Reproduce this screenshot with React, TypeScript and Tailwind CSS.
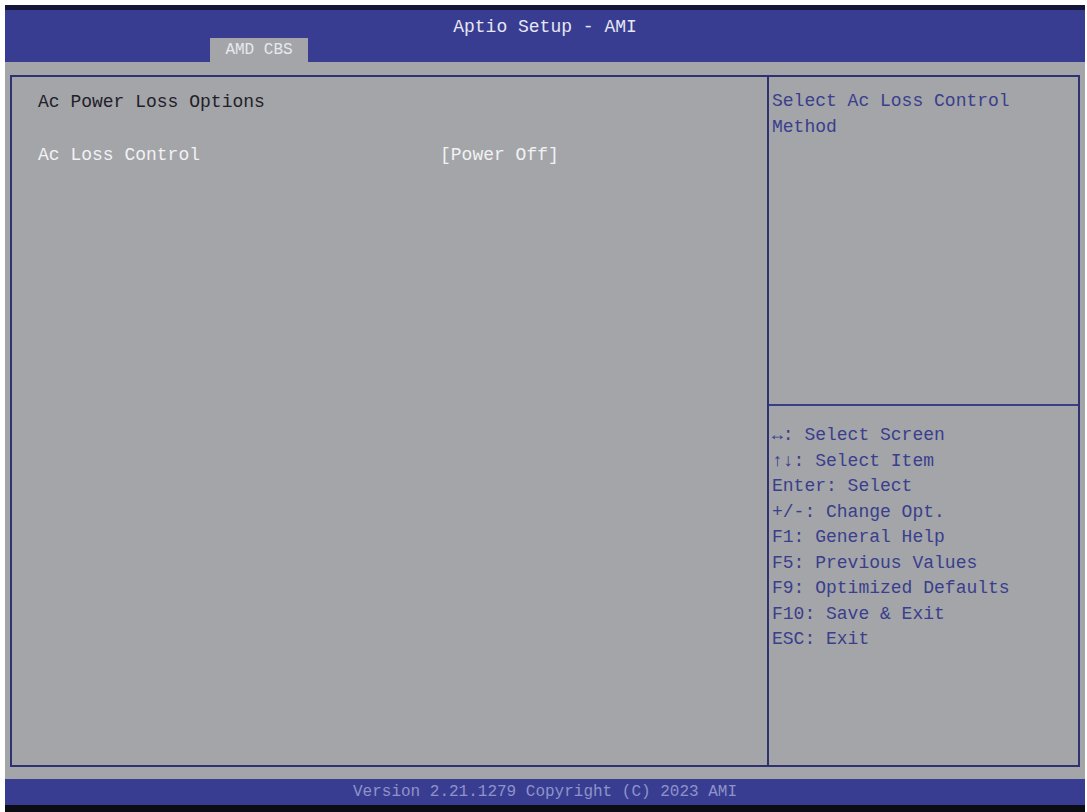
export default function App() {
  const help = [
    '\u2194: Select Screen',
    '\u2191\u2193: Select Item',
    'Enter: Select',
    '+/-: Change Opt.',
    'F1: General Help',
    'F5: Previous Values',
    'F9: Optimized Defaults',
    'F10: Save & Exit',
    'ESC: Exit',
  ]
  return (
    <div className="w-[1087px] h-[812px] bg-white pl-[5px] pt-[5px] pr-[2px] font-[Liberation_Mono] text-[18px] leading-none">
      <div className="h-[807px] flex flex-col bg-[#a3a5a9]">
        <div className="h-[57px] bg-[#393d92] border-t-[5px] border-[#14163a] relative flex justify-center">
          <span className="mt-[8px] text-[#e6e7f2]">Aptio Setup - AMI</span>
          <div className="absolute left-[205px] bottom-0 w-[98px] h-[24px] bg-[#a3a5a9] flex items-center justify-center text-[#e8e9ee] text-[16px]">
            AMD CBS
          </div>
        </div>
        <div className="h-[13px]" />
        <div className="mx-[5px] flex-1 flex border-2 border-[#2e3270]">
          <div className="w-[757px] border-r-2 border-[#2e3270] pl-[26px] pt-[16px]">
            <div className="text-[#1f2028]">Ac Power Loss Options</div>
            <div className="flex mt-[35px] text-[#f2f2f4]">
              <span className="w-[402px]">Ac Loss Control</span>
              <span>[Power Off]</span>
            </div>
          </div>
          <div className="flex-1 flex flex-col">
            <div className="h-[329px] border-b-2 border-[#3a3e86] px-[3px] pt-[16px] text-[#3a3e8c] leading-[26px]">
              <div className="-mt-[5px]">Select Ac Loss Control</div>
              <div>Method</div>
            </div>
            <div className="px-[3px] pt-[17px] text-[#3a3e8c] leading-[25.5px]">
              {help.map((h) => (
                <div key={h}>{h}</div>
              ))}
            </div>
          </div>
        </div>
        <div className="h-[12px]" />
        <div className="h-[26px] bg-[#393d92] flex items-center justify-center text-[#8f93c8] text-[16px]">
          Version 2.21.1279 Copyright (C) 2023 AMI
        </div>
        <div className="h-[7px] bg-[#0c0c14]" />
      </div>
    </div>
  )
}
